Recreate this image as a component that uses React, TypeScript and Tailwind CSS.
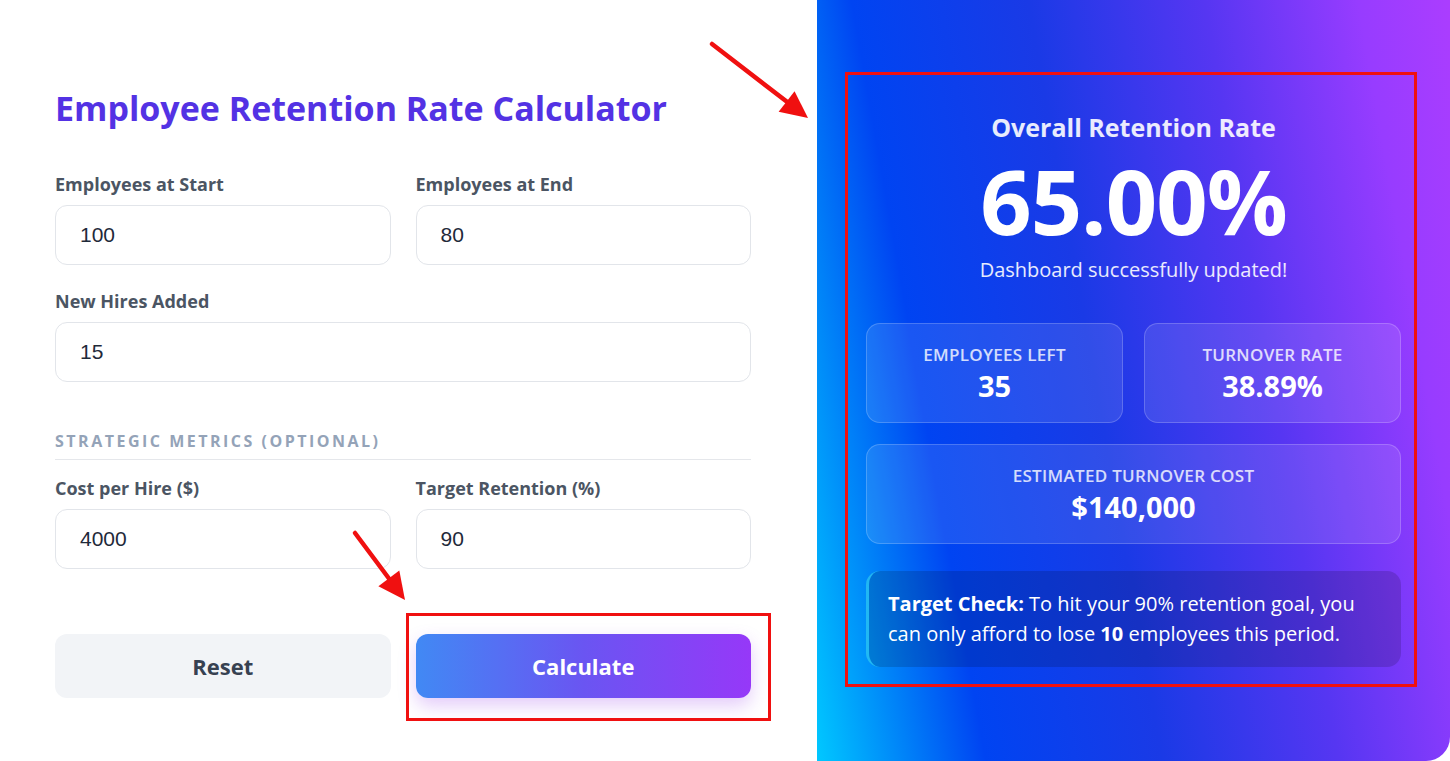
import React from "react";

const font = "font-['Open_Sans','Noto_Sans',sans-serif]";

function Field({ label, value }: { label: string; value: string }) {
  return (
    <div className="flex flex-col">
      <label className="text-[18px] leading-[24px] font-bold text-[#4b5563] mb-[9px]">{label}</label>
      <div className="h-[60px] rounded-[12px] border border-[#e2e5ea] bg-white flex items-center px-[24px]">
        <span className="font-['Liberation_Sans',Arial,sans-serif] text-[21px] text-[#1f2a3a]">{value}</span>
      </div>
    </div>
  );
}

function Stat({ label, value }: { label: string; value: string }) {
  return (
    <div className="rounded-[14px] bg-white/10 border border-white/20 flex flex-col items-center pt-[19px] pb-[19px]">
      <p className="text-[17px] leading-[24px] font-semibold uppercase tracking-[0.3px] text-white/80">{label}</p>
      <p className="text-[29px] leading-[34px] font-bold text-white mt-[2px]">{value}</p>
    </div>
  );
}

function Arrow({ x1, y1, x2, y2 }: { x1: number; y1: number; x2: number; y2: number }) {
  const a = Math.atan2(y2 - y1, x2 - x1);
  const len = 30;
  const w = 0.45;
  const p1 = [x2 - len * Math.cos(a - w), y2 - len * Math.sin(a - w)];
  const p2 = [x2 - len * Math.cos(a + w), y2 - len * Math.sin(a + w)];
  const bx = x2 - 20 * Math.cos(a);
  const by = y2 - 20 * Math.sin(a);
  return (
    <g>
      <line x1={x1} y1={y1} x2={bx} y2={by} stroke="#f01010" strokeWidth="4.5" strokeLinecap="round" />
      <polygon points={`${x2},${y2} ${p1[0]},${p1[1]} ${p2[0]},${p2[1]}`} fill="#f01010" />
    </g>
  );
}

export default function App() {
  return (
    <div className={`relative w-[1450px] h-[761px] flex bg-white overflow-hidden ${font}`}>
      {/* Form */}
      <div className="w-[817px] pl-[55px] pt-[86px]">
        <div className="w-[696px]">
          <h1 className="text-[34px] leading-[44px] font-bold text-[#5332e4]">
            Employee Retention Rate Calculator
          </h1>
          <div className="grid grid-cols-2 gap-x-[25px] mt-[42px]">
            <Field label="Employees at Start" value="100" />
            <Field label="Employees at End" value="80" />
          </div>
          <div className="mt-[24px]">
            <Field label="New Hires Added" value="15" />
          </div>
          <div className="mt-[49px] pb-[8px] border-b border-[#e5e7eb]">
            <p className="text-[16px] leading-[20px] font-bold tracking-[2.5px] text-[#94a3b8]">
              STRATEGIC METRICS (OPTIONAL)
            </p>
          </div>
          <div className="grid grid-cols-2 gap-x-[25px] mt-[16px]">
            <Field label="Cost per Hire ($)" value="4000" />
            <Field label="Target Retention (%)" value="90" />
          </div>
          <div className="grid grid-cols-2 gap-x-[25px] mt-[65px]">
            <button className="h-[64px] rounded-[12px] bg-[#f2f4f7] text-[22px] font-bold text-[#374151]">
              Reset
            </button>
            <button className="h-[64px] rounded-[12px] bg-[linear-gradient(90deg,#4189f4,#6a55f2_50%,#9638f8)] text-[22px] font-bold text-white shadow-[0_8px_18px_rgba(147,51,234,0.25)]">
              Calculate
            </button>
          </div>
        </div>
      </div>

      {/* Results */}
      <div className="flex-1 rounded-br-[24px] bg-[linear-gradient(80deg,#00c8ff_0%,#0044f2_22%,#1a3ae6_45%,#5636f2_68%,#973cff_88%,#ab3dff_100%)] px-[49px] pt-[110px] text-white">
        <div className="flex flex-col items-center">
          <p className="text-[25px] leading-[34px] font-bold text-white/90">Overall Retention Rate</p>
          <p className="text-[90px] leading-[100px] font-bold tracking-[-1px] mt-[6px]">65.00%</p>
          <p className="text-[20px] leading-[28px] text-white/90 mt-[6px]">Dashboard successfully updated!</p>
        </div>
        <div className="grid grid-cols-2 gap-x-[21px] gap-y-[21px] mt-[39px]">
          <Stat label="Employees Left" value="35" />
          <Stat label="Turnover Rate" value="38.89%" />
          <div className="col-span-2">
            <Stat label="Estimated Turnover Cost" value="$140,000" />
          </div>
        </div>
        <div className="mt-[27px] rounded-[14px] bg-black/15 border-l-[3px] border-[#2fd3ff]/70 pl-[19px] pr-[16px] py-[18px] text-[20px] leading-[30px] text-white">
          <strong className="font-bold">Target Check:</strong> To hit your 90% retention goal, you can only afford to
          lose <strong className="font-bold">10</strong> employees this period.
        </div>
      </div>

      {/* Annotations */}
      <div className="absolute left-[406px] top-[613px] w-[365px] h-[108px] border-[3px] border-[#f01010]" />
      <div className="absolute left-[845px] top-[72px] w-[572px] h-[615px] border-[3px] border-[#f01010]" />
      <svg className="absolute inset-0 pointer-events-none" width="1450" height="761">
        <Arrow x1={712} y1={44} x2={808} y2={118} />
        <Arrow x1={355} y1={533} x2={405} y2={600} />
      </svg>
    </div>
  );
}
